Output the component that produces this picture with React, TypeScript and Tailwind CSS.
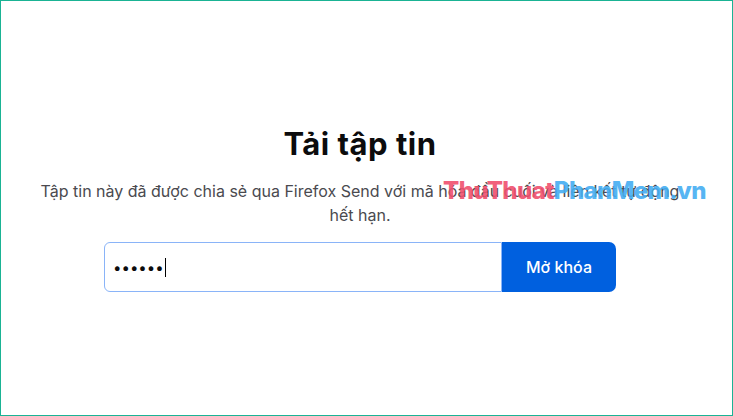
import React from "react";

const App = () => {
  return (
    <div
      className="relative flex h-[416px] w-[733px] flex-col items-center justify-center border border-[#1ab394] bg-white pr-[13px]"
      style={{ fontFamily: "Inter, 'Noto Sans', sans-serif" }}
    >
      <div className="flex flex-col items-center">
        <h1 className="text-[31px] font-bold leading-[40px] tracking-[0.5px] text-[#0c0c0d]">
          Tải tập tin
        </h1>
        <p className="mt-[15px] w-[660px] text-center text-[16px] leading-[24px] text-[#4a4a4f]">
          Tập tin này đã được chia sẻ qua Firefox Send với mã hóa đầu cuối và liên kết tự động
          hết hạn.
        </p>
        <form className="mt-[15px] flex h-[50px] w-[512px]" onSubmit={(e) => e.preventDefault()}>
          <div className="flex flex-1 items-center rounded-l-[6px] border border-[#8ab4f8] bg-white pl-[8px]">
            <span className="text-[15px] leading-none text-[#0c0c0d]">••••••</span>
            <span className="ml-[1px] h-[19px] w-px bg-black" />
          </div>
          <button
            type="submit"
            className="w-[114px] rounded-r-[7px] bg-[#0060df] text-[16px] font-medium text-white"
          >
            Mở khóa
          </button>
        </form>
      </div>
      {/* watermark */}
      <div className="pointer-events-none absolute left-[442px] top-[175px] text-[24px] font-extrabold leading-[30px] tracking-[-0.6px] opacity-90">
        <span className="text-[#f0506e]">ThuThuat</span>
        <span className="text-[#45aef2]">PhanMem.vn</span>
      </div>
    </div>
  );
};

export default App;
